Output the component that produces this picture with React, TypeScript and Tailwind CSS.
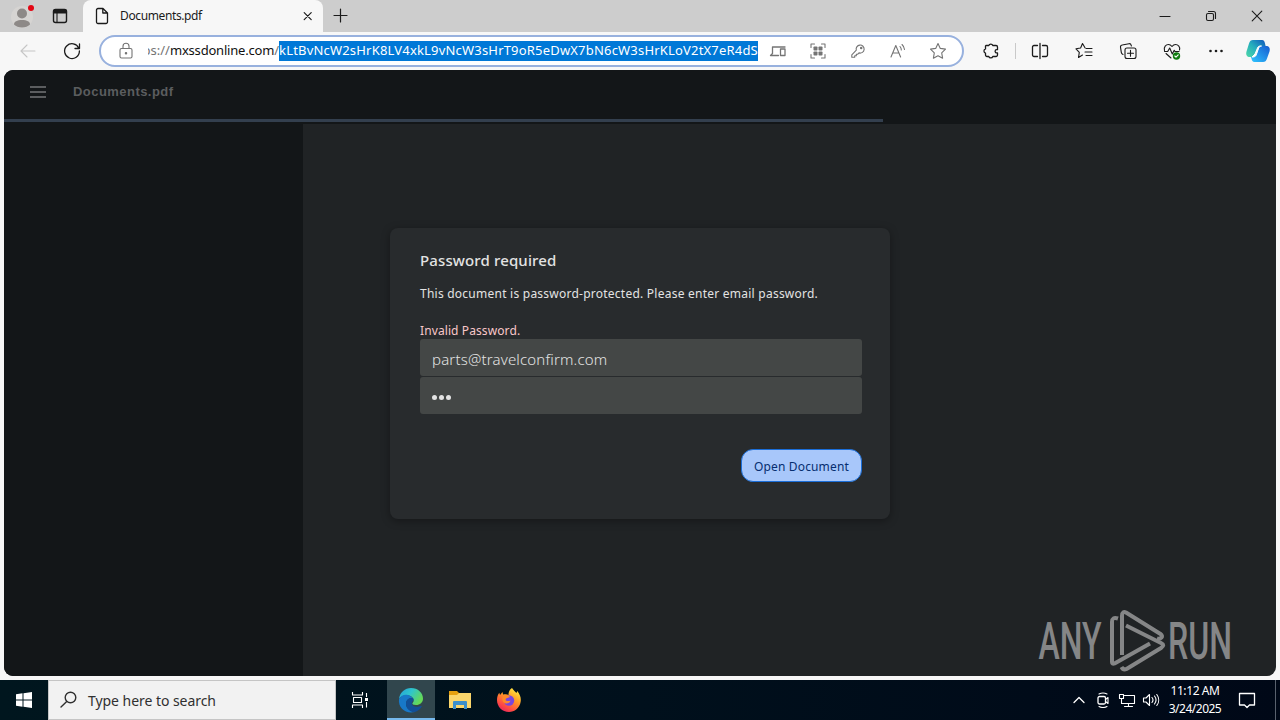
import React from 'react';

type IconProps = {
  size?: number;
  box?: string;
  className?: string;
  children: React.ReactNode;
};

// Line icon, stroke follows the text colour
const Icon = ({ size = 20, box = '0 0 20 20', className = '', children }: IconProps) => (
  <svg
    width={size}
    height={size}
    viewBox={box}
    fill="none"
    stroke="currentColor"
    strokeWidth="1.1"
    strokeLinecap="round"
    strokeLinejoin="round"
    className={`shrink-0 ${className}`}
  >
    {children}
  </svg>
);

const Cell = ({ w = 'w-11', children }: { w?: string; children: React.ReactNode }) => (
  <div className={`flex h-full shrink-0 items-center justify-center ${w}`}>{children}</div>
);

const TabBar = () => (
  <div className="flex h-8 bg-[#cdcdcd] text-[#1b1b1b]">
    <div className="flex w-[83px] items-center rounded-br-md pl-[11px]">
      <svg width="24" height="26" viewBox="0 0 24 26" className="shrink-0">
        <circle cx="11" cy="14" r="11" fill="#d6d4d2" />
        <circle cx="11" cy="10.5" r="5" fill="#8d8987" />
        <path d="M3 21.5c0-3 3-4.500 8-4.500s8 1.500 8 4.500c-2 2-4.500 3-8 3s-6-1-8-3z" fill="#8d8987" />
        <circle cx="20" cy="5" r="3" fill="#e30613" />
      </svg>
      <Icon className="ml-[15px]">
        <rect x="3.500" y="3.500" width="13" height="13" rx="2" strokeWidth="1.400" />
        <path d="M3.500 5.500a2 2 0 0 1 2-2h9a2 2 0 0 1 2 2V7h-13z" fill="currentColor" />
        <path d="M7 7v9" />
      </Icon>
    </div>
    <div className="flex w-60 items-center rounded-t-lg bg-[#f7f7f7] pl-[9px]">
      <Icon>
        <path strokeWidth="1.300" d="M6 2.500h5l4.500 4.500v9a1.500 1.500 0 0 1-1.500 1.500H6A1.500 1.500 0 0 1 4.500 16V4A1.500 1.500 0 0 1 6 2.500zM10.800 2.500V7h4.700" />
      </Icon>
      <span className="ml-2 w-[180px] text-[12px] leading-4 tracking-[-0.38px]">Documents.pdf</span>
      <Icon size={16} box="0 0 16 16">
        <path strokeWidth="1.200" d="M4.200 4.700l7 7M11.200 4.700l-7 7" />
      </Icon>
    </div>
    <div className="flex w-9 items-center justify-center">
      <Icon><path strokeWidth="1.200" d="M9.500 3v13M3 9.500h13" /></Icon>
    </div>
    <div className="ml-auto flex">
      <Cell w="w-[46px]"><Icon size={12} box="0 0 12 12"><path d="M1 6.500h10" /></Icon></Cell>
      <Cell w="w-[46px]">
        <Icon size={12} box="0 0 12 12">
          <rect x="1.500" y="3.500" width="7" height="7" rx="1.500" />
          <path d="M3.500 1.500h5a2 2 0 0 1 2 2v5" />
        </Icon>
      </Cell>
      <Cell w="w-[46px]"><Icon size={12} box="0 0 12 12"><path d="M1.200 1.200l9.600 9.600M10.800 1.200l-9.600 9.600" /></Icon></Cell>
    </div>
  </div>
);

const AddressBar = () => (
  <div className="ml-[5px] flex h-8 w-[865px] items-center overflow-hidden rounded-full border-2 border-[#98b1de] bg-white text-[#747474]">
    <div className="flex w-[47px] shrink-0 justify-center pr-px pl-[4px]">
      <Icon>
        <rect x="4" y="7.500" width="12" height="9.500" rx="1.500" />
        <path d="M7 7.500V5.300a3 3 0 0 1 6 0v2.200" />
        <circle cx="10" cy="12.200" r=".7" fill="currentColor" />
      </Icon>
    </div>
    <div className="flex h-5 w-[131px] shrink-0 items-center justify-end overflow-hidden text-[13px] whitespace-nowrap">
      <span>https://<span className="tracking-[-0.2px] text-[#111]">mxssdonline.com</span>/</span>
    </div>
    <div className="flex h-5 w-[479px] shrink-0 items-center bg-[#0078d7] text-[13px] tracking-[0.19px] whitespace-nowrap text-white">
      kLtBvNcW2sHrK8LV4xkL9vNcW3sHrT9oR5eDwX7bN6cW3sHrKLoV2tX7eR4dS
    </div>
    <Cell w="w-10">
      <Icon>
        <path strokeWidth="1.300" d="M4.500 12.500V6h12.500M2.500 14.500h8M4.500 12.500l-2 2M12.500 8h4.500v6.500h-4.500z" />
      </Icon>
    </Cell>
    <Cell w="w-10">
      <Icon>
        <path d="M3 6.500V3h3.500M13.500 3H17v3.500M17 13.500V17h-3.500M6.500 17H3v-3.500" />
        <g fill="currentColor" stroke="none">
          <rect x="5.500" y="5.500" width="4" height="4" rx=".8" />
          <rect x="10.500" y="5.500" width="4" height="4" rx=".8" />
          <rect x="5.500" y="10.500" width="4" height="4" rx=".8" />
          <rect x="10.500" y="10.500" width="4" height="4" rx=".8" />
        </g>
      </Icon>
    </Cell>
    <Cell w="w-10">
      <Icon>
        <path d="M8.300 9.200a4 4 0 1 1 2.700 2.700l-1.200 1.300H8.300v1.600H6.700v1.500H3.800v-2.500z" />
        <circle cx="13.200" cy="6.900" r=".7" />
      </Icon>
    </Cell>
    <Cell w="w-10">
      <Icon>
        <path d="M3 16L7.800 4.500 12.600 16M4.700 12h6.200M12 5.500a5 5 0 0 1 1.300 3.500M14 3.500a8 8 0 0 1 2.500 5" />
      </Icon>
    </Cell>
    <Cell w="w-10">
      <Icon>
        <path d="M10 2.500l2.300 4.900 5.200.7-3.800 3.700.9 5.400-4.600-2.500-4.600 2.500.9-5.400-3.800-3.700 5.200-.7z" />
      </Icon>
    </Cell>
  </div>
);

const Toolbar = () => (
  <div className="flex h-[38px] items-center bg-[#f7f7f7] pl-1.5 text-[#1b1b1b]">
    <Cell>
      <Icon className="text-[#c6c6c6]"><path d="M17 10H3M9 4l-6 6 6 6" /></Icon>
    </Cell>
    <Cell>
      <Icon><path strokeWidth="1.300" d="M16.800 7.200A7.400 7.400 0 1 0 17.400 10M17.500 3v4.500H13" /></Icon>
    </Cell>
    <AddressBar />
    <div className="ml-[5px] h-full">
      <Cell>
        <Icon>
          <path strokeWidth="1.300" d="M5 4.500h2.800a2.100 2.100 0 0 1 4 0H15a1.500 1.500 0 0 1 1.500 1.500v2.700h-.8a1.600 1.600 0 0 0 0 3.200h.8V14a1.500 1.500 0 0 1-1.500 1.500h-3.200a2.100 2.100 0 0 1-4 0H6A1.500 1.500 0 0 1 4.500 14v-1.900a2.200 2.200 0 0 1 0-4.200V5z" />
        </Icon>
      </Cell>
    </div>
    <div className="mx-0.5 h-4 w-px bg-[#c9c9c9]" />
    <Cell>
      <Icon><path strokeWidth="1.300" d="M7.500 4.500H4A1.500 1.500 0 0 0 2.500 6v8A1.500 1.500 0 0 0 4 15.500h3.500M12.500 4.500H16A1.500 1.500 0 0 1 17.500 6v8a1.500 1.500 0 0 1-1.500 1.500h-3.500M10 2.500v15" /></Icon>
    </Cell>
    <Cell>
      <Icon><path d="M11 6.800L8.500 2.500 6.600 7l-4.600.8 3.300 3.500-.8 5.200L8.500 14M12 7.500h6M11 11h7M12 14.500h6" /></Icon>
    </Cell>
    <Cell>
      <Icon>
        <path d="M5 13.500A2.500 2.500 0 0 1 3.300 11.400L2.500 6.200A2 2 0 0 1 4.200 4l6.800-1.300a2 2 0 0 1 2.200 1.600l.2.700" />
        <rect x="7" y="7" width="11" height="10.500" rx="2" />
        <path d="M12.500 9.300v6M9.500 12.300h6" />
      </Icon>
    </Cell>
    <Cell>
      <Icon>
        <path d="M2.500 9.500C1.500 6 4 3.500 6.500 3.500c1.700 0 2.700 1 3.500 2 .8-1 1.800-2 3.500-2 2.500 0 5 2.500 4 5.500M2.500 10.500h3.200l2-3.500 2.600 6 1.900-3.800.8 1.300h4M4 12.500l5 4.500" />
        <circle cx="14.500" cy="15" r="3.700" fill="#107c10" stroke="none" />
        <path d="M12.800 15l1.200 1.200 2.200-2.300" stroke="#fff" />
      </Icon>
    </Cell>
    <Cell>
      <Icon>
        <g fill="currentColor" stroke="none">
          <circle cx="4.500" cy="10" r="1.300" />
          <circle cx="10" cy="10" r="1.300" />
          <circle cx="15.500" cy="10" r="1.300" />
        </g>
      </Icon>
    </Cell>
    <Cell w="w-10">
      <svg width="26" height="24" viewBox="0 0 26 24">
        <defs>
          <linearGradient id="copilotA" x1="0" y1="1" x2="1" y2="0">
            <stop offset="0" stopColor="#4fd8a8" />
            <stop offset=".5" stopColor="#25aebd" />
            <stop offset="1" stopColor="#1154bd" />
          </linearGradient>
          <linearGradient id="copilotB" x1="0" y1="1" x2="1" y2="0">
            <stop offset="0" stopColor="#2fc5ff" />
            <stop offset="1" stopColor="#175bd0" />
          </linearGradient>
        </defs>
        <path d="M8 1h9c2 0 2.500 1.500 3 3.500l.6 2.500H17c-2 0-3 1-3.600 3l-1.800 6c-.5 1.500-1.400 2-3 2H5c-3 0-4.500-2-3.500-5.500L4 4.500C4.700 2 6 1 8 1z" fill="url(#copilotA)" />
        <path d="M18 23H9.500c-2 0-2.500-1.500-3-3.500L6 18h2.600c1.600 0 2.500-.5 3-2l1.800-6c.6-2 1.600-3 3.600-3h4c3 0 4.500 2 3.500 5.500L22 19.500c-.7 2.500-2 3.500-4 3.500z" fill="url(#copilotB)" />
        <path d="M12.500 9c.5-1.500 1.500-2 3-2h1c-2 0-2.600 1.300-3.200 3l-1.800 5c-.6 1.700-1.500 3-3.500 3h-1l3-3z" fill="#fff" stroke="#fff" />
      </svg>
    </Cell>
  </div>
);

const PasswordDialog = () => (
  <div className="mt-[104px] ml-[87px] flex h-[291px] w-[500px] flex-col rounded-lg bg-[#282b2d] pt-[21px] pr-7 pl-[30px] text-[#e3e3e3] shadow-[0_2px_8px_rgba(0,0,0,0.35)]">
    <h2 className="text-[15px] leading-[22px] font-medium tracking-[0.13px] whitespace-nowrap">Password required</h2>
    <p className="mt-[14px] text-[12px] leading-[18px] tracking-[0.24px] whitespace-nowrap">
      This document is password-protected. Please enter email password.
    </p>
    <p className="mt-[19px] text-[12px] leading-[17px] tracking-[0.1px] text-[#f9c7c9]">Invalid Password.</p>
    <div className="flex h-[37px] items-center rounded-[3px] bg-[#444746] pt-1 pl-3 text-[15px] font-light tracking-[0.17px]">
      <span>parts@travelconfirm.com</span>
    </div>
    <div className="mt-px flex h-[37px] items-center gap-[2px] rounded-[3px] bg-[#444746] pt-[3px] pl-3">
      <i className="size-[5px] rounded-full bg-[#e3e3e3]" />
      <i className="size-[5px] rounded-full bg-[#e3e3e3]" />
      <i className="size-[5px] rounded-full bg-[#e3e3e3]" />
    </div>
    <button className="mt-[35px] h-[33px] w-[121px] self-end rounded-xl border border-[#1b6ed8] bg-[#a8c7fa] pt-[2px] text-[12px] tracking-[0.15px] whitespace-nowrap text-[#062e6f]">
      Open Document
    </button>
  </div>
);

const Watermark = () => (
  <svg width="210" height="64" viewBox="0 0 210 64" className="absolute right-7 bottom-[3px]">
    <g fill="#858687" fontFamily="Roboto, sans-serif" fontSize="52" fontWeight="500">
      <text x="0.5" y="50" textLength="63" lengthAdjust="spacingAndGlyphs">ANY</text>
      <text x="130" y="50" textLength="64" lengthAdjust="spacingAndGlyphs">RUN</text>
    </g>
    <g fill="none" stroke="#858687" strokeWidth="4" strokeLinejoin="round">
      <path d="M80 9.500q-6-2-6 3.500v40q0 2.500 2.500 1.500L112 34.500" />
      <path d="M84 46V7c0-4 2-4.500 4-3.500L122.500 25c3.500 2.500.5 5.500-3.500 4.500" />
      <path d="M88 16.500L123 34c3 1.500 3 3 0 5L88.500 60c-2.500 1-4 0-5-2" />
    </g>
  </svg>
);

const DocumentPage = () => (
  <div className="relative mx-1 h-[606px] overflow-hidden rounded-[9px] bg-[#202325]">
    <div className="flex h-[49px] items-center bg-[#131618] pb-[5px] pl-[25px] text-[#5b5d5f]">
      <svg width="18" height="14" viewBox="0 0 18 14" stroke="currentColor" strokeWidth="2">
        <path d="M1 2h16M1 7h16M1 12h16" />
      </svg>
      <span className="ml-[26px] font-['Liberation_Sans',sans-serif] text-[13px] font-bold tracking-[0.45px]">Documents.pdf</span>
    </div>
    <div className="h-[5px] bg-[#131618]">
      <div className="h-[3px] w-[879px] bg-[#333f4e]" />
    </div>
    <div className="flex h-[552px]">
      <div className="w-[299px] shrink-0 bg-[#131618]" />
      <PasswordDialog />
    </div>
    <Watermark />
  </div>
);

const EdgeLogo = () => (
  <svg width="26" height="26" viewBox="0 0 26 26">
    <defs>
      <linearGradient id="edgeTop" x1="0" y1="0" x2="1" y2=".5">
        <stop offset="0" stopColor="#259fd9" />
        <stop offset=".5" stopColor="#2fc5cc" />
        <stop offset="1" stopColor="#65d957" />
      </linearGradient>
    </defs>
    <path d="M1 12C2 5 7 1 13 1c7 0 12 5 12 10.500 0 4-3 6.500-7 6.500-3 0-4-1-3.500-2 1-1 1.500-2 1-3.500C14 7 4 7 1 12z" fill="url(#edgeTop)" />
    <path d="M1 12c2-4 6-5 9-4 3 .7 5 3 5.500 5C13 10 8 12 8 17c0 4 4 7.500 9 8-1.300.3-2.600.4-4 .4C6 25.400 0 20 1 12z" fill="#1878c8" />
    <path d="M15.500 11.500C11 10 8 13 8 17c0 5 5 8.500 9 8 3-1 5.500-3 6.600-5.200.4-.7-.1-1-.8-.7-5 2.100-9.400-.3-9-3.300.1-1 1.200-1.700 1.700-2.800z" fill="#124f97" />
  </svg>
);

const FirefoxLogo = () => (
  <svg width="26" height="26" viewBox="0 0 26 26">
    <defs>
      <linearGradient id="foxBody" x1=".8" y1="0" x2=".2" y2="1">
        <stop offset="0" stopColor="#fff044" />
        <stop offset=".4" stopColor="#ff9a25" />
        <stop offset=".75" stopColor="#ff4c43" />
        <stop offset="1" stopColor="#e5205f" />
      </linearGradient>
    </defs>
    <path d="M16 1c2 2.500 3 3.500 4.500 5l.8-2c3 4 4 7 3.300 11-1 6-6 10-11.600 10C6 25 1 19.500 1 13c0-2.700.8-5.500 2.300-7.300L4 8l2.500-3 .6 2.600C9 7 11 7 12.500 8c0-3 1-5.500 3.500-7z" fill="url(#foxBody)" />
    <circle cx="13" cy="13.500" r="5.200" fill="#7846df" />
    <path d="M7 9c3-2 6-1 7 1l-3.500 1.300c-1.300.5-1 2.200.4 2.600 1.300.3 2.600.3 3.500-.5-.3 3-4.400 4-6.900 1.800C6 13.500 6 11 7 9z" fill="#ff8a28" />
  </svg>
);

const Taskbar = () => (
  <div className="flex h-10 bg-gradient-to-r from-[#00161e] via-[#00101c] to-[#000817] text-white">
    <Cell w="w-12">
      <svg width="16" height="16" viewBox="0 0 16 16" fill="#fff">
        <path d="M0 2.200L6.500 1.300V7.500H0zM7.500 1.200L16 0v7.500H7.500zM0 8.500h6.500v6.200L0 13.800zM7.500 8.500H16V16l-8.500-1.200z" />
      </svg>
    </Cell>
    <div className="flex w-72 items-center border border-[#c5c5c5] bg-[#f2f2f2] pl-2.5 text-[#303030]">
      <Icon>
        <circle cx="11.500" cy="7.500" r="5.300" strokeWidth="1.400" />
        <path strokeWidth="1.400" d="M7.700 11.500L2 17" />
      </Icon>
      <span className="ml-[9px] text-[14px] tracking-[-0.05px] whitespace-nowrap">Type here to search</span>
    </div>
    <Cell w="w-12">
      <Icon size={18} box="0 0 18 18">
        <path strokeLinecap="butt" d="M1.500 1v3h10V1M1.500 17v-3h10v3M2.500 6.500h8v5h-8zM15.500 2v4M15.500 11v5.500" />
        <rect x="14" y="7" width="3" height="3" fill="currentColor" stroke="none" />
      </Icon>
    </Cell>
    <div className="ml-[3px] flex w-12 items-center justify-center border-b-2 border-[#76b9ed] bg-[#31464d] pt-0.5">
      <EdgeLogo />
    </div>
    <Cell w="w-[49px]">
      <svg width="22" height="20" viewBox="0 0 22 20">
        <path d="M0 1h8l2 2h12v5H0z" fill="#e5a00f" />
        <path d="M0 5h8l2-2h12v15H0z" fill="#fad56b" />
        <path d="M4 19v-7a1 1 0 0 1 1-1h12a1 1 0 0 1 1 1v7h-3v-4H7v4z" fill="#3a8ecb" />
      </svg>
    </Cell>
    <Cell w="w-[49px]"><FirefoxLogo /></Cell>
    <div className="ml-auto flex pr-1">
      <Cell w="w-6"><Icon size={14} box="0 0 14 14"><path strokeWidth="1.300" d="M2 9.500l5-5 5 5" /></Icon></Cell>
      <Cell w="w-6">
        <Icon size={16} box="0 0 16 16">
          <rect x="3" y="4.500" width="7.500" height="7.500" rx="1.500" strokeWidth="1.300" />
          <path d="M10.500 7.500l2.500-2v6l-2.500-2M4 2q4-2 8 0M4 14.500q4 2 8 0" />
        </Icon>
      </Cell>
      <Cell w="w-6">
        <Icon size={18} box="0 0 18 18">
          <path d="M6.500 4.500h10v8h-11M6.500 15.500h8M10.500 12.500v3M1.500 3.500h4v4h-4zM3.500 7.500v5h2" />
        </Icon>
      </Cell>
      <Cell w="w-6">
        <Icon size={18} box="0 0 18 18">
          <path d="M1.500 7v4h2.500l3.500 3.500v-11L4 7zM10 6.500a4 4 0 0 1 0 5M12.500 5a6.500 6.500 0 0 1 0 8M14.800 3.500a9 9 0 0 1 0 11" />
        </Icon>
      </Cell>
      <div className="flex w-16 flex-col items-center justify-center text-[12px] leading-[18px] whitespace-nowrap">
        <span className="tracking-[-0.4px]">11:12 AM</span>
        <span className="tracking-[-0.5px]">3/24/2025</span>
      </div>
      <Cell w="w-10">
        <Icon size={18} box="0 0 18 18">
          <path strokeWidth="1.300" d="M1.500 2.500h15v11.500h-5L9 16.500 6.500 14h-5z" />
        </Icon>
      </Cell>
      <div className="ml-2 w-px bg-[#59616d]" />
    </div>
  </div>
);

export default function App() {
  return (
    <div className="h-[720px] w-[1280px] overflow-hidden bg-[#f7f7f7] font-['Noto_Sans','Open_Sans',sans-serif]">
      <TabBar />
      <Toolbar />
      <DocumentPage />
      <div className="h-1" />
      <Taskbar />
    </div>
  );
}
